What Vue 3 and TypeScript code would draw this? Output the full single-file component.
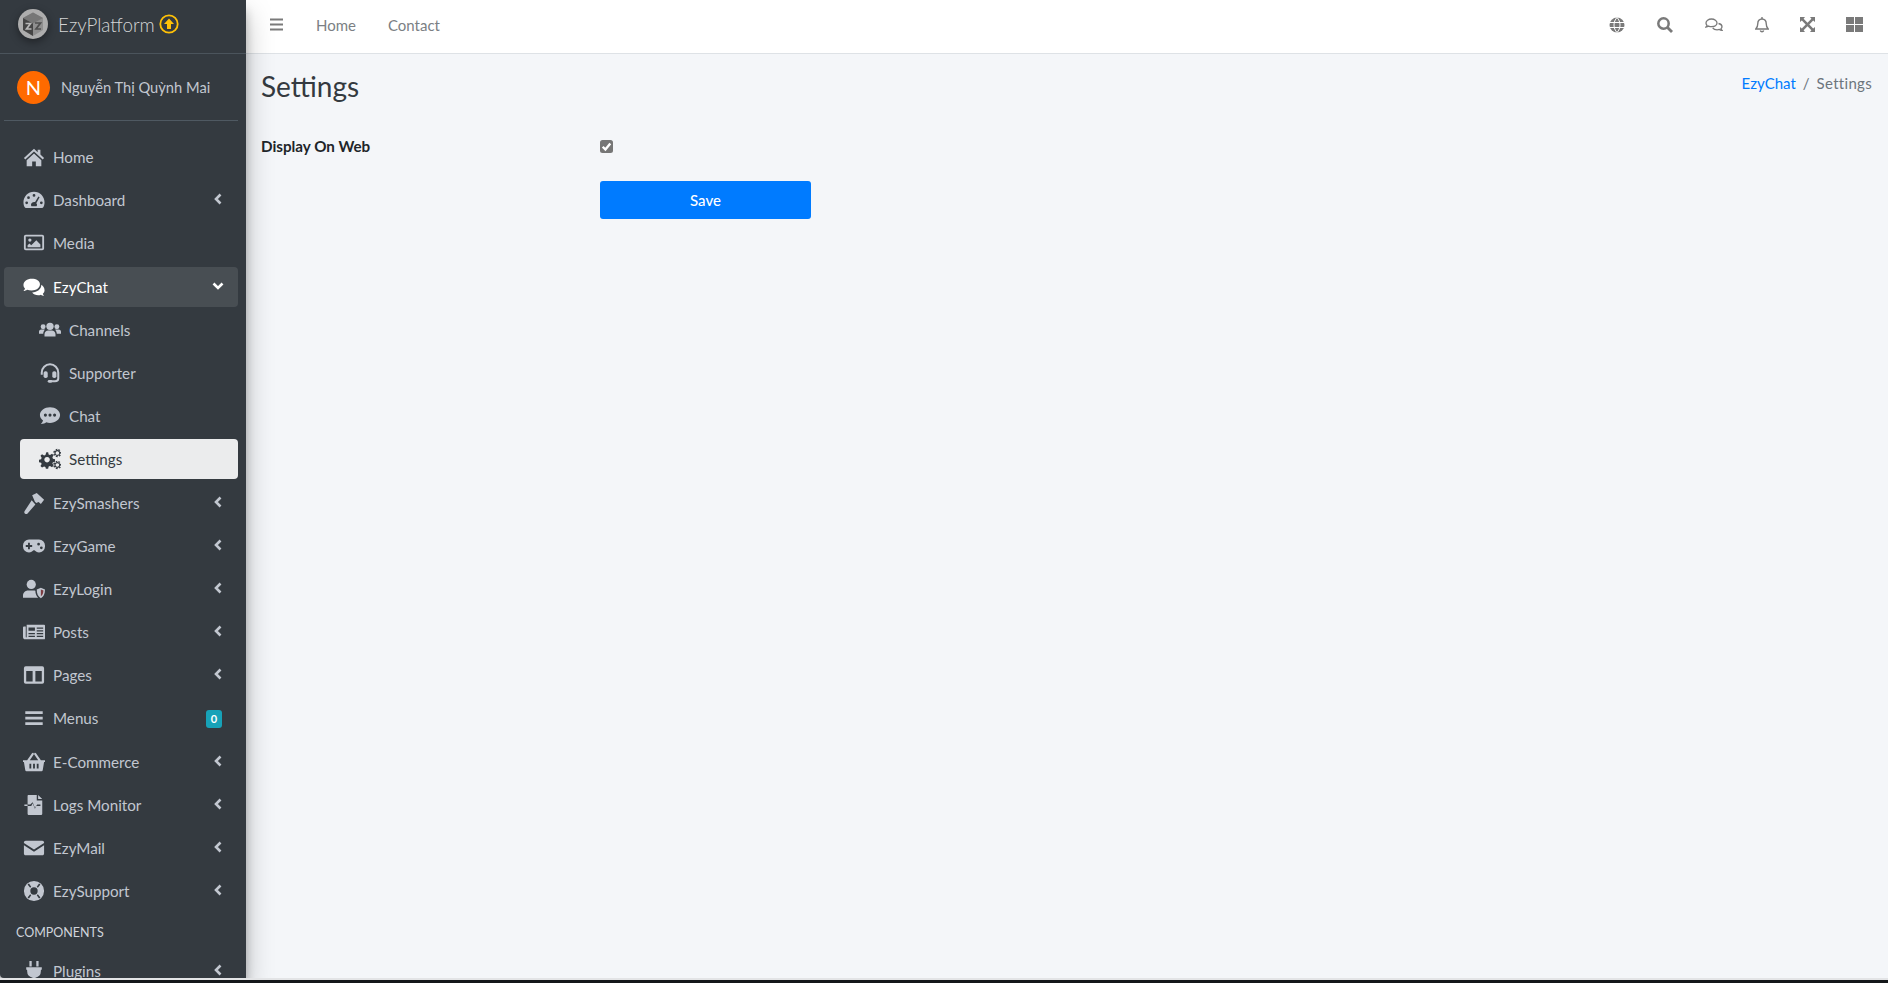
<template>
  <div class="app">
    <aside class="sidebar">
      <div class="brand">
        <svg class="brand-logo" viewBox="0 0 32 32">
          <circle cx="16" cy="16" r="15" fill="#adadad" />
          <path d="M16 4.500 26 10v12l-10 6L6 22V10z" fill="#8f8f8f" />
          <path d="M16 4.500 26 10l-10 5.500L6 10z" fill="#777" />
          <path d="M6 10l10 5.500V28L6 22z" fill="#454545" />
          <path d="M8.500 15.500h5l-4 5.500h5" fill="none" stroke="#b8b8b8" stroke-width="1.700" />
          <path d="M18 15h5.500l-4.500 6h5" fill="none" stroke="#4f4f4f" stroke-width="1.700" />
        </svg>
        <span class="brand-text">EzyPlatform</span>
        <svg class="brand-up" viewBox="0 0 20 20">
          <circle cx="10" cy="10" r="8.700" fill="none" stroke="#ffc107" stroke-width="1.800" />
          <path d="M10 4.600 15 10h-3v5H8v-5H5z" fill="#ffc107" />
        </svg>
      </div>
      <div class="user">
        <div class="avatar">N</div>
        <span class="user-name">Nguyễn Thị Quỳnh Mai</span>
      </div>
      <nav class="nav">
        <template v-for="item in items" :key="item.label">
          <div v-if="item.header" class="nav-header">{{ item.label }}</div>
          <a v-else class="nav-link" :class="{ sub: item.sub, open: item.open, active: item.active }">
            <svg class="nav-icon" viewBox="0 0 24 24" v-html="icons[item.icon!]"></svg>
            <span class="nav-label">{{ item.label }}</span>
            <span v-if="item.badge" class="badge">{{ item.badge }}</span>
            <svg v-else-if="item.arrow" class="chevron" viewBox="0 0 12 12">
              <path :d="item.open ? 'M1.500 3.500 6 8l4.500-4.500' : 'M8.500 1.500 4 6l4.500 4.500'" fill="none" stroke="currentColor" stroke-width="2.600" />
            </svg>
          </a>
        </template>
      </nav>
    </aside>
    <div class="main">
      <header class="topbar">
        <svg class="bars" viewBox="0 0 13 13"><path d="M0 1.500h13M0 6.500h13M0 11.500h13" stroke="#7a7a7a" stroke-width="2" /></svg>
        <a class="top-link">Home</a>
        <a class="top-link">Contact</a>
        <div class="top-icons">
          <svg class="top-icon" viewBox="0 0 16 16">
            <circle cx="8" cy="8" r="7.500" fill="#7a7a7a" />
            <path d="M.5 5.500h15M.5 10.500h15M8 .5c-4 4-4 11 0 15M8 .5c4 4 4 11 0 15" fill="none" stroke="#fff" stroke-width="1" />
          </svg>
          <svg class="top-icon" viewBox="0 0 16 16">
            <circle cx="6.500" cy="6.500" r="5.200" fill="none" stroke="#7a7a7a" stroke-width="2.500" />
            <path d="M10.500 10.500 15 15" stroke="#7a7a7a" stroke-width="2.800" />
          </svg>
          <svg class="top-icon chat" viewBox="0 0 18 16">
            <path d="M6.500 2C3.400 2 1 3.800 1 6c0 .9.400 1.700 1 2.400-.2.700-.7 1.300-1 1.600 1 0 2-.4 2.600-.9.900.4 1.900.6 2.900.6 3.100 0 5.500-1.700 5.500-3.700S9.600 2 6.500 2z" fill="none" stroke="#7a7a7a" stroke-width="1.300" />
            <path d="M13.500 6.500c2 .4 3.500 1.700 3.500 3.200 0 .8-.4 1.500-1 2 .2.700.6 1.300.9 1.600-1 0-1.900-.4-2.500-.9-.8.300-1.500.4-2.300.4-1.900 0-3.600-.7-4.400-1.900" fill="none" stroke="#7a7a7a" stroke-width="1.300" />
          </svg>
          <svg class="top-icon bell" viewBox="0 0 14 16">
            <path d="M7 2C4.200 2 2.800 4 2.800 6.500c0 3.300-1 4.300-2 5.500h12.400c-1-1.200-2-2.200-2-5.500C11.200 4 9.800 2 7 2z" fill="none" stroke="#7a7a7a" stroke-width="1.400" />
            <path d="M7 0v2M5.300 13.500a1.800 1.800 0 0 0 3.400 0" fill="none" stroke="#7a7a7a" stroke-width="1.400" />
          </svg>
          <svg class="top-icon expand" viewBox="0 0 15 15">
            <path d="M0 0h5L3.600 1.800 7.500 5.700l3.900-3.900L10 0h5v5l-1.800-1.400-3.900 3.900 3.900 3.900L15 10v5h-5l1.400-1.800-3.900-3.900-3.900 3.900L5 15H0v-5l1.800 1.400 3.900-3.900-3.900-3.900L0 5z" fill="#7a7a7a" />
          </svg>
          <svg class="top-icon grid" viewBox="0 0 17 15">
            <path d="M0 0h8v7H0zM9 0h8v7H9zM0 8h8v7H0zM9 8h8v7H9z" fill="#7a7a7a" />
          </svg>
        </div>
      </header>
      <main class="content">
        <div class="title-row">
          <h1 class="page-title">Settings</h1>
          <div class="crumbs">
            <a class="crumb-link">EzyChat</a>
            <span class="crumb-sep">/</span>
            <span class="crumb-current">Settings</span>
          </div>
        </div>
        <form class="form" @submit.prevent>
          <label class="form-label">Display On Web</label>
          <div class="form-field">
            <span class="check">
              <svg viewBox="0 0 12 12"><path d="M2.500 6.200 5 8.800 9.500 3.200" fill="none" stroke="#fff" stroke-width="2.200" /></svg>
            </span>
          </div>
          <span></span>
          <button class="save" type="submit">Save</button>
        </form>
      </main>
    </div>
    <div class="page-end"></div>
  </div>
</template>

<script setup lang="ts">
interface Item {
  label: string
  icon?: string
  arrow?: boolean
  sub?: boolean
  open?: boolean
  active?: boolean
  badge?: string
  header?: boolean
}

const icons: Record<string, string> = {
  home: '<path fill="currentColor" d="M12 3 1 13l1.500 1.600L12 6l9.500 8.600L23 13l-4-3.600V4h-3v2.700zM4 15.500V22h6v-5h4v5h6v-6.500L12 8.200z"/>',
  gauge: '<path fill="currentColor" fill-rule="evenodd" d="M12 3C5.500 3 .5 8.200.5 14.500c0 2 .5 3.900 1.400 5.500.3.500.8.800 1.300.8h17.600c.5 0 1-.3 1.300-.8.900-1.600 1.400-3.500 1.400-5.500C23.500 8.200 18.500 3 12 3zM12 5.500a1.500 1.500 0 1 1 0 3 1.500 1.500 0 0 1 0-3zM6 8a1.500 1.500 0 1 1 0 3 1.500 1.500 0 0 1 0-3zM4 13.500a1.500 1.500 0 1 1 0 3 1.500 1.500 0 0 1 0-3zM20 13.500a1.500 1.500 0 1 1 0 3 1.500 1.500 0 0 1 0-3zM16.800 8.200l1.300.7-3.600 6.600c.5.500.8 1.100.8 1.800 0 .6-.2 1.100-.5 1.500H9.200c-.3-.4-.5-.9-.5-1.500a3.300 3.300 0 0 1 4.500-3z"/>',
  image: '<path fill="currentColor" fill-rule="evenodd" d="M3 3h18A2 2 0 0 1 23 5v13a2 2 0 0 1-2 2H3a2 2 0 0 1-2-2V5a2 2 0 0 1 2-2zM3 5v13h18V5zM7.500 7a1.800 1.800 0 1 1 0 3.600 1.800 1.800 0 0 1 0-3.600zM5 16.500v-2l2-2 2 2 5.500-5.500L19 13.500v3z"/>',
  comments: '<path fill="currentColor" d="M9.500 3C4.500 3 .5 6 .5 9.800c0 1.500.6 2.900 1.700 4-.4 1.100-1.200 2-1.700 2.500 1.600-.1 3-.7 4-1.400 1.500.6 3.200.9 5 .9 5 0 9-3 9-6.800S14.500 3 9.500 3z"/><path fill="currentColor" d="M20 9.500c.1 4.800-4.500 8.200-10 8.500 1.300 1.900 3.900 3 6.500 3 1.100 0 2.200-.2 3.100-.6.800.6 2 1.100 3.400 1.100-.5-.5-1.100-1.300-1.400-2.200 1.200-1 1.900-2.300 1.900-3.800 0-2.500-1.600-4.700-3.500-6z"/>',
  users: '<circle fill="currentColor" cx="12" cy="8" r="4"/><circle fill="currentColor" cx="4.500" cy="8.500" r="2.700"/><circle fill="currentColor" cx="19.500" cy="8.500" r="2.700"/><path fill="currentColor" d="M6 19v-2.500c0-2.500 2-4 4-4h4c2 0 4 1.500 4 4V19zM0 16v-2c0-1.500 1-2.500 2.500-2.500h3c.3 0 .6.100.9.200C5.400 12.800 4.700 14.200 4.600 16zM24 16v-2c0-1.500-1-2.500-2.500-2.500h-3c-.3 0-.6.100-.9.200 1 1.100 1.700 2.500 1.800 4.300z"/>',
  headset: '<path fill="none" stroke="currentColor" stroke-width="2.200" d="M3 14v-2.500a9 9 0 0 1 18 0V18c0 2-1.500 3-3.500 3H13"/><rect fill="currentColor" x="5" y="10" width="4.500" height="7.500" rx="2"/><rect fill="currentColor" x="14.500" y="10" width="4.500" height="7.500" rx="2"/><rect fill="currentColor" x="9.500" y="19.500" width="5" height="3" rx="1.500"/>',
  chat: '<path fill="currentColor" fill-rule="evenodd" d="M12 2.500c6 0 11 3.700 11 8.500s-5 8.500-11 8.500c-1.500 0-2.900-.2-4.100-.7-1.200 1-3.100 1.900-5.900 1.900.9-1 2-2.300 2.400-3.800C2.300 15.500 1 13.400 1 11c0-4.800 5-8.500 11-8.500zM7 9.300a1.700 1.700 0 1 0 0 3.400 1.700 1.700 0 0 0 0-3.400zM12 9.300a1.700 1.700 0 1 0 0 3.400 1.700 1.700 0 0 0 0-3.400zM17 9.300a1.700 1.700 0 1 0 0 3.400 1.700 1.700 0 0 0 0-3.400z"/>',
  cogs: '<path fill="currentColor" fill-rule="evenodd" d="M8 4.500h2l.5 2.500 1.500.6 2.200-1.300 1.700 1.700-1.300 2.200.6 1.500 2.300.5v2.800l-2.300.5-.6 1.500 1.300 2.200-1.700 1.700-2.200-1.300-1.500.6-.5 2.500H7.500L7 20.700l-1.500-.6-2.200 1.300-1.700-1.700 1.300-2.200-.6-1.500-2.300-.5v-2.800l2.300-.5.6-1.500-1.300-2.200 1.700-1.700 2.200 1.300 1.500-.6zM8.800 9.800a3 3 0 1 0 .01 0z"/><path fill="none" stroke="currentColor" stroke-width="1.300" d="M20 2.900a2.600 2.600 0 1 0 .01 0zM20 15.900a2.600 2.600 0 1 0 .01 0z"/><path fill="none" stroke="currentColor" stroke-width="1.500" stroke-dasharray="1.800 1.500" d="M20 1.700a3.800 3.800 0 1 0 .01 0zM20 14.700a3.800 3.800 0 1 0 .01 0z"/>',
  hammer: '<path fill="currentColor" d="M10 3.500 15 1l8 7.500-3.500 4.500-2.500-2-2.500 1-1.500-1.500zM9.500 9l4 4.500L5 23.500c-.8.800-2.200.8-3 0s-.8-2.200 0-3z"/>',
  gamepad: '<path fill="currentColor" fill-rule="evenodd" d="M6.500 5h11A6.500 6.500 0 0 1 24 11.500v1A6.500 6.500 0 0 1 17.500 19c-2.200 0-3.700-1.300-5-2.500h-1c-1.300 1.200-2.800 2.500-5 2.500A6.500 6.500 0 0 1 0 12.500v-1A6.500 6.500 0 0 1 6.500 5zM5.500 8.500v2.500H3v2h2.500v2.500h2V13H10v-2H7.500V8.500zM17 8.500a1.500 1.500 0 1 0 0 3 1.500 1.500 0 0 0 0-3zM20 12.500a1.500 1.500 0 1 0 0 3 1.500 1.500 0 0 0 0-3z"/>',
  shield: '<circle fill="currentColor" cx="9" cy="7" r="5"/><path fill="currentColor" d="M0 21.500V19c0-3 2.500-5.500 5.500-5.500h6c.7 0 1.400.1 2 .4 0 3 1 5.500 3 7.600z"/><path fill="currentColor" d="M19.500 10.500l4.500 2c0 4.500-1.500 8-4.500 9.500-3-1.500-4.500-5-4.500-9.500z"/><path fill="#7c3b40" d="M19.500 12.500v7.500c1.800-1 2.700-3.500 2.800-6.300z"/>',
  newspaper: '<path fill="currentColor" fill-rule="evenodd" d="M4 4h19c.6 0 1 .4 1 1v14c0 .6-.4 1-1 1H2.500C1 20 0 19 0 17.500V7c0-.6.400-1 1-1h2v11.500c0 .3.200.5.500.5s.5-.2.500-.5zM6 7v3.500h7V7zM15 7v1.500h7V7zM15 10v1.500h7V10zM6 13v1.500h7V13zM15 13v1.500h7V13zM6 16v1.500h7V16zM15 16v1.500h7V16z"/>',
  columns: '<path fill="currentColor" fill-rule="evenodd" d="M3 2.500h18A2 2 0 0 1 23 4.500v15a2 2 0 0 1-2 2H3a2 2 0 0 1-2-2v-15a2 2 0 0 1 2-2zM3.500 7.500V19h7V7.500zM13.500 7.500V19h7V7.500z"/>',
  bars: '<path fill="currentColor" d="M2.500 4.500h19v3h-19zM2.500 10.500h19v3h-19zM2.500 16.500h19v3h-19z"/>',
  basket: '<path fill="currentColor" fill-rule="evenodd" d="M0 10h4.500L9.800 2.500c.4-.5 1.100-.7 1.600-.3.500.4.700 1.100.3 1.600L7.400 10h9.200l-4.300-6.200c-.4-.5-.2-1.200.3-1.600.5-.4 1.200-.2 1.600.3L19.500 10H24v2h-1l-1.500 9c-.1.600-.6 1-1.200 1H3.700c-.6 0-1.100-.4-1.200-1L1 12H0zM7 14v5h2v-5zM11 14v5h2v-5zM15 14v5h2v-5z"/>',
  log: '<path fill="currentColor" d="M6 1h9v6h6v14.500c0 .8-.7 1.500-1.500 1.500h-13C5.700 23 5 22.300 5 21.500V13h4l1.500-3 2.500 6 1.500-3H19v-1.500h-3.500l-2.500 3.500-2.500-6L8 11.500H5V2c0-.5.500-1 1-1z"/><path fill="currentColor" d="M16.500 1 21 5.500h-4.500zM1.500 11.500H5V13H1.500z"/>',
  envelope: '<path fill="currentColor" d="M3 4h18c1.300 0 2 1 2 2v.5l-11 7-11-7V6c0-1 .7-2 2-2zM1 9l11 7 11-7v9c0 1.100-.7 2-2 2H3c-1.300 0-2-.9-2-2z"/>',
  lifering: '<path fill="currentColor" fill-rule="evenodd" d="M12 1a11 11 0 1 1 0 22 11 11 0 0 1 0-22zM12 8a4 4 0 1 0 0 8 4 4 0 0 0 0-8zM6.500 3.800 5 5l2.800 3.400 1.200-1zM17.500 3.800 15 7.400l1.200 1L19 5zM7.800 15.600 5 19l1.500 1.200 2.500-3.600zM16.200 15.600 15 16.600l2.500 3.600L19 19z"/>',
  plug: '<path fill="currentColor" d="M7 1h2.500v6H7zM14.500 1H17v6h-2.500zM3.500 8h17v2.500h-1V12a7.500 7.500 0 0 1-6 7.300V23h-3v-3.700a7.500 7.500 0 0 1-6-7.300v-1.500h-1z"/>'
}

const items: Item[] = [
  { label: 'Home', icon: 'home' },
  { label: 'Dashboard', icon: 'gauge', arrow: true },
  { label: 'Media', icon: 'image' },
  { label: 'EzyChat', icon: 'comments', arrow: true, open: true },
  { label: 'Channels', icon: 'users', sub: true },
  { label: 'Supporter', icon: 'headset', sub: true },
  { label: 'Chat', icon: 'chat', sub: true },
  { label: 'Settings', icon: 'cogs', sub: true, active: true },
  { label: 'EzySmashers', icon: 'hammer', arrow: true },
  { label: 'EzyGame', icon: 'gamepad', arrow: true },
  { label: 'EzyLogin', icon: 'shield', arrow: true },
  { label: 'Posts', icon: 'newspaper', arrow: true },
  { label: 'Pages', icon: 'columns', arrow: true },
  { label: 'Menus', icon: 'bars', badge: '0' },
  { label: 'E-Commerce', icon: 'basket', arrow: true },
  { label: 'Logs Monitor', icon: 'log', arrow: true },
  { label: 'EzyMail', icon: 'envelope', arrow: true },
  { label: 'EzySupport', icon: 'lifering', arrow: true },
  { label: 'COMPONENTS', header: true },
  { label: 'Plugins', icon: 'plug', arrow: true }
]
</script>

<style>
html, body {
  margin: 0;
  overflow: hidden;
}
</style>

<style scoped>
.app {
  display: flex;
  height: 983px;
  position: relative;
  overflow: hidden;
  font-family: "Lato", "Noto Sans", sans-serif;
  font-size: 16px;
  color: #343a40;
  background: #f4f6f9;
}

.sidebar {
  width: 246px;
  height: 978px;
  flex: none;
  background: #343a40;
  border-bottom-left-radius: 4px;
  box-shadow: 0 14px 28px rgba(0, 0, 0, .25), 0 10px 10px rgba(0, 0, 0, .22);
  overflow: hidden;
  z-index: 2;
}

.brand {
  display: flex;
  align-items: center;
  height: 48px;
  padding: 0 0 5px 18px;
  border-bottom: 1px solid #4b545c;
}

.brand-logo {
  width: 32px;
  height: 32px;
  margin-left: -1px;
  filter: drop-shadow(0 3px 4px rgba(0, 0, 0, .4));
}

.brand-text {
  margin-left: 9px;
  font-size: 18.800px;
  font-weight: 300;
  color: rgba(255, 255, 255, .8);
}

.brand-up {
  width: 20px;
  height: 20px;
  margin-left: 4px;
}

.user {
  display: flex;
  align-items: center;
  height: 66px;
  margin: 0 8px 0 4px;
  padding-left: 13px;
  border-bottom: 1px solid #4f5962;
}

.avatar {
  width: 33px;
  height: 33px;
  border-radius: 50%;
  background: #ff6a00;
  color: #fff;
  font-size: 20px;
  text-align: center;
  line-height: 33px;
}

.user-name {
  margin-left: 11px;
  font-size: 14.700px;
  color: #c2c7d0;
}

.nav {
  margin-top: 16px;
  padding: 0 8px 0 4px;
}

.nav-link {
  display: flex;
  align-items: center;
  height: 40px;
  margin-bottom: 3.200px;
  padding-left: 18px;
  border-radius: 4px;
  color: #c2c7d0;
  font-size: 15.200px;
}

.nav-link.open {
  background: rgba(255, 255, 255, .1);
  color: #fff;
}

.nav-link.sub {
  margin-left: 16px;
}

.nav-link.active {
  background: #ebeced;
  color: #343a40;
}

.nav-icon {
  width: 22px;
  height: 22px;
  flex: none;
  margin-left: .5px;
  margin-right: 8.500px;
}

.nav-label {
  flex: 1;
}

.chevron {
  width: 12px;
  height: 12px;
  margin-right: 14px;
  margin-bottom: 2px;
}

.badge {
  width: 16px;
  height: 18px;
  margin-top: 1px;
  margin-right: 16px;
  border-radius: 3px;
  background: #17a2b8;
  color: #fff;
  font-size: 11px;
  font-weight: 700;
  text-align: center;
  line-height: 18px;
}

.nav-header {
  padding: 10px 0 10px 12px;
  font-size: 12.500px;
  line-height: 17px;
  color: #d0d4db;
}

.main {
  flex: 1;
  min-width: 0;
}

.topbar {
  display: flex;
  align-items: center;
  height: 49px;
  padding: 0 0 4px 24px;
  background: #fff;
  border-bottom: 1px solid #dee2e6;
}

.bars {
  width: 13px;
  height: 13px;
}

.top-link {
  margin-left: 32px;
  font-size: 15px;
  color: #7b7f84;
}

.top-link:first-of-type {
  margin-left: 33px;
}

.top-icons {
  display: flex;
  align-items: center;
  gap: 32px;
  margin-left: auto;
  margin-right: 25px;
}

.top-icon {
  width: 16px;
  height: 16px;
}

.top-icon.chat {
  width: 18px;
}

.top-icon.bell {
  width: 14px;
}

.top-icon.expand {
  width: 15px;
  height: 15px;
  margin-left: -1px;
}

.top-icon.grid {
  width: 17px;
  height: 15px;
  margin-left: -1px;
}

.content {
  padding: 0 16px 0 15px;
}

.title-row {
  display: flex;
  justify-content: space-between;
  padding-top: 13px;
}

.page-title {
  margin: 0;
  font-size: 28px;
  font-weight: 400;
  line-height: 38px;
  color: #343a40;
}

.crumbs {
  display: flex;
  gap: 7px;
  padding-top: 7px;
  font-size: 15px;
  color: #6c757d;
}

.crumb-link {
  color: #007bff;
}

.crumb-current {
  letter-spacing: .3px;
}

.form {
  display: grid;
  grid-template-columns: 339px 1fr;
  row-gap: 23px;
  margin-top: 29px;
}

.form-label {
  font-size: 15.200px;
  font-weight: 700;
  color: #212529;
  line-height: 24px;
}

.form-field {
  display: flex;
  align-items: center;
  height: 24px;
}

.check {
  display: flex;
  width: 13px;
  height: 13px;
  border-radius: 2.500px;
  background: #767676;
}

.save {
  width: 211px;
  height: 38px;
  border: 0;
  border-radius: 3px;
  background: #007bff;
  color: #fff;
  font: inherit;
  font-size: 15px;
  font-weight: 500;
}

.page-end {
  position: absolute;
  left: 0;
  right: 0;
  bottom: 0;
  height: 3px;
  z-index: 3;
  background: #14171a;
  border-top: 2px solid #e3e4e6;
}
</style>
